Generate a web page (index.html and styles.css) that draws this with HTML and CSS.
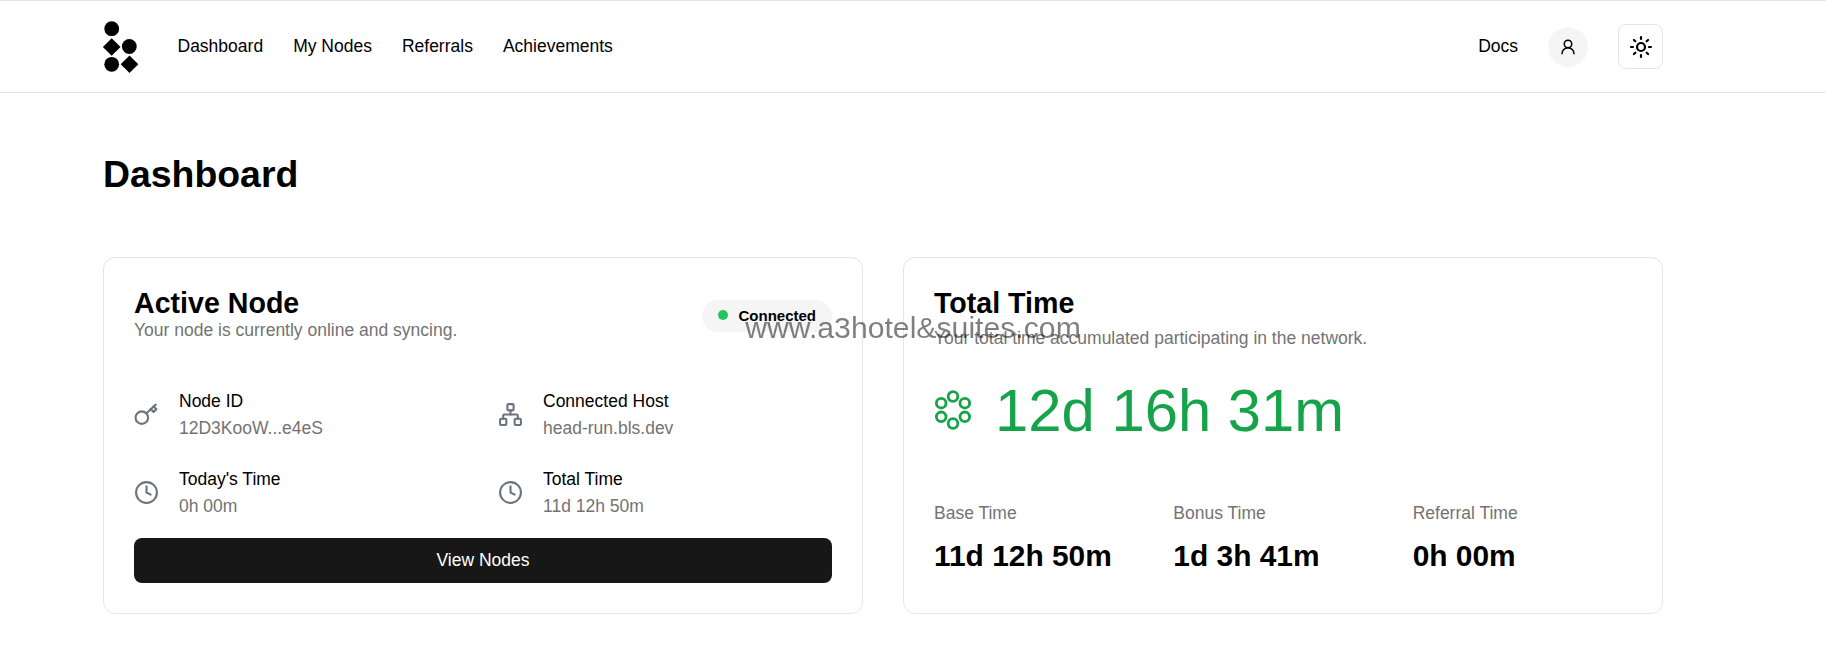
FILE: index.html
```html
<!DOCTYPE html>
<html lang="en">
<head>
    <meta charset="UTF-8">
    <meta name="viewport" content="width=device-width, initial-scale=1.0">
    <title>Dashboard</title>
    <link rel="stylesheet" href="styles.css">
</head>
<body>
    <header class="topbar">
        <div class="wrap topbar-inner">
            <svg class="logo" viewBox="0 0 36 52" fill="#000">
                <circle cx="8.7" cy="7.7" r="7.4"/>
                <path d="M8.7 17.2l8.8 8.8-8.8 8.8L-.1 26z"/>
                <circle cx="26.3" cy="25.5" r="7.4"/>
                <circle cx="8.7" cy="43.3" r="7.4"/>
                <path d="M26.5 34.5l8.8 8.8-8.8 8.7-8.8-8.7z"/>
            </svg>
            <nav class="nav">
                <a>Dashboard</a>
                <a>My Nodes</a>
                <a>Referrals</a>
                <a>Achievements</a>
            </nav>
            <a class="docs">Docs</a>
            <div class="avatar">
                <svg width="18" height="18" viewBox="0 0 24 24" fill="none" stroke="#000" stroke-width="2" stroke-linecap="round" stroke-linejoin="round">
                    <circle cx="12" cy="8" r="5"/>
                    <path d="M20 21a8 8 0 0 0-16 0"/>
                </svg>
            </div>
            <div class="theme-btn">
                <svg width="24" height="24" viewBox="0 0 24 24" fill="none" stroke="#000" stroke-width="2.2" stroke-linecap="round" stroke-linejoin="round">
                    <circle cx="12" cy="12" r="4"/>
                    <path d="M12 2v2M12 20v2M4.93 4.93l1.41 1.41M17.66 17.66l1.41 1.41M2 12h2M20 12h2M6.34 17.66l-1.41 1.41M19.07 4.93l-1.41 1.41"/>
                </svg>
            </div>
        </div>
    </header>

    <main class="wrap">
        <h1 class="page-title">Dashboard</h1>

        <div class="cards">
            <section class="card">
                <div class="card-head">
                    <div>
                        <h2 class="card-title">Active Node</h2>
                        <p class="card-sub">Your node is currently online and syncing.</p>
                    </div>
                    <span class="status"><i class="status-dot"></i>Connected</span>
                </div>

                <div class="info-grid">
                    <div class="info">
                        <svg class="info-icon" viewBox="0 0 24 24">
                            <circle cx="7.5" cy="15" r="6"/>
                            <path d="M12 10.8 21 2.5"/>
                            <path d="m16 6.8 2.8 2.8 2.7-2.7-2.8-2.8"/>
                        </svg>
                        <div>
                            <div class="info-label">Node ID</div>
                            <div class="info-value">12D3KooW...e4eS</div>
                        </div>
                    </div>
                    <div class="info">
                        <svg class="info-icon" viewBox="0 0 24 24">
                            <rect x="16" y="16" width="6" height="6" rx="1"/>
                            <rect x="2" y="16" width="6" height="6" rx="1"/>
                            <rect x="9" y="2" width="6" height="6" rx="1"/>
                            <path d="M5 16v-3a1 1 0 0 1 1-1h12a1 1 0 0 1 1 1v3"/>
                            <path d="M12 12V8"/>
                        </svg>
                        <div>
                            <div class="info-label">Connected Host</div>
                            <div class="info-value">head-run.bls.dev</div>
                        </div>
                    </div>
                    <div class="info">
                        <svg class="info-icon" viewBox="0 0 24 24">
                            <circle cx="12" cy="12" r="10"/>
                            <path d="M12 6v6l4 2"/>
                        </svg>
                        <div>
                            <div class="info-label">Today's Time</div>
                            <div class="info-value">0h 00m</div>
                        </div>
                    </div>
                    <div class="info">
                        <svg class="info-icon" viewBox="0 0 24 24">
                            <circle cx="12" cy="12" r="10"/>
                            <path d="M12 6v6l4 2"/>
                        </svg>
                        <div>
                            <div class="info-label">Total Time</div>
                            <div class="info-value">11d 12h 50m</div>
                        </div>
                    </div>
                </div>

                <button class="view-btn">View Nodes</button>
            </section>

            <section class="card">
                <h2 class="card-title">Total Time</h2>
                <p class="card-sub card-sub-spaced">Your total time accumulated participating in the network.</p>

                <div class="total">
                    <svg class="total-icon" viewBox="0 0 40 40">
                        <circle cx="20" cy="6.5" r="4.8"/>
                        <circle cx="31.8" cy="13.2" r="4.8"/>
                        <circle cx="31.8" cy="26.8" r="4.8"/>
                        <circle cx="20" cy="33.5" r="4.8"/>
                        <circle cx="8.2" cy="26.8" r="4.8"/>
                        <circle cx="8.2" cy="13.2" r="4.8"/>
                    </svg>
                    <span class="total-value">12d 16h 31m</span>
                </div>

                <div class="stats">
                    <div>
                        <div class="stat-label">Base Time</div>
                        <div class="stat-value">11d 12h 50m</div>
                    </div>
                    <div>
                        <div class="stat-label">Bonus Time</div>
                        <div class="stat-value">1d 3h 41m</div>
                    </div>
                    <div>
                        <div class="stat-label">Referral Time</div>
                        <div class="stat-value">0h 00m</div>
                    </div>
                </div>
            </section>
        </div>
    </main>

    <div class="watermark">www.a3hotel&amp;suites.com</div>
</body>
</html>
```

FILE: styles.css
```css
* {
    box-sizing: border-box;
}
body {
    margin: 0;
    font-family: "Liberation Sans", Arial, sans-serif;
    color: #000;
    background: #fff;
}
.wrap {
    width: 1560px;
    margin-left: 103px;
}
.topbar {
    height: 93px;
    border-top: 1px solid #e5e5e5;
    border-bottom: 1px solid #e5e5e5;
}
.topbar-inner {
    display: flex;
    align-items: center;
    height: 100%;
}
.logo {
    width: 36px;
    height: 52px;
    overflow: visible;
}
.nav {
    display: flex;
    gap: 30px;
    margin-left: 38.5px;
    flex: 1;
    font-size: 17.5px;
}
.docs {
    font-size: 17.5px;
}
.avatar {
    width: 40px;
    height: 40px;
    margin-left: 30px;
    border-radius: 50%;
    background: #f5f5f5;
    display: flex;
    align-items: center;
    justify-content: center;
}
.theme-btn {
    width: 45px;
    height: 45px;
    margin-left: 30px;
    border: 1px solid #e5e5e5;
    border-radius: 8px;
    display: flex;
    align-items: center;
    justify-content: center;
}
.page-title {
    margin: 60px 0 61px;
    font-size: 37.4px;
    line-height: 43px;
    font-weight: 700;
}
.cards {
    display: grid;
    grid-template-columns: 1fr 1fr;
    gap: 40px;
}
.card {
    height: 357px;
    padding: 30px;
    border: 1px solid #e5e5e5;
    border-radius: 12px;
}
.card-head {
    display: flex;
    justify-content: space-between;
    align-items: flex-start;
}
.card-title {
    margin: 0;
    font-size: 28.6px;
    line-height: 30px;
    font-weight: 700;
}
.card-sub {
    margin: 0;
    font-size: 17.5px;
    line-height: 25px;
    color: #737373;
}
.card-sub-spaced {
    margin-top: 8px;
}
.status {
    display: flex;
    align-items: center;
    gap: 10px;
    height: 32px;
    margin-top: 12px;
    padding: 0 16px 2px;
    border-radius: 16px;
    background: #f5f5f5;
    font-size: 15px;
    font-weight: 700;
}
.status-dot {
    width: 10px;
    height: 10px;
    border-radius: 50%;
    background: #22c55e;
}
.info-grid {
    display: grid;
    grid-template-columns: 1fr 1fr;
    gap: 27px 30px;
    margin-top: 46px;
}
.info {
    display: flex;
    align-items: center;
    gap: 20px;
}
.info-icon {
    width: 25px;
    height: 25px;
    fill: none;
    stroke: #6b7280;
    stroke-width: 2;
    stroke-linecap: round;
    stroke-linejoin: round;
}
.info-label {
    font-size: 17.5px;
    line-height: 24px;
}
.info-value {
    margin-top: 3px;
    font-size: 17.5px;
    line-height: 24px;
    color: #737373;
}
.view-btn {
    display: block;
    width: 100%;
    height: 45px;
    margin-top: 20px;
    border: none;
    border-radius: 8px;
    background: #171717;
    color: #fff;
    font-family: inherit;
    font-size: 17.5px;
}
.total {
    display: flex;
    align-items: center;
    gap: 22px;
    height: 72px;
    margin-top: 23px;
}
.total-icon {
    width: 40px;
    height: 40px;
    margin-left: -1px;
    fill: none;
    stroke: #16a34a;
    stroke-width: 2.8;
}
.total-value {
    font-size: 59.8px;
    color: #16a34a;
}
.stats {
    display: grid;
    grid-template-columns: repeat(3, 1fr);
    gap: 20px;
    margin-top: 55px;
}
.stat-label {
    font-size: 17.5px;
    line-height: 24px;
    color: #737373;
}
.stat-value {
    margin-top: 14px;
    font-size: 29.9px;
    line-height: 34px;
    font-weight: 700;
}
.watermark {
    position: fixed;
    top: 0;
    left: 0;
    right: 0;
    height: 655px;
    display: flex;
    align-items: center;
    justify-content: center;
    font-size: 30.2px;
    color: rgba(0, 0, 0, 0.5);
    pointer-events: none;
}
```
